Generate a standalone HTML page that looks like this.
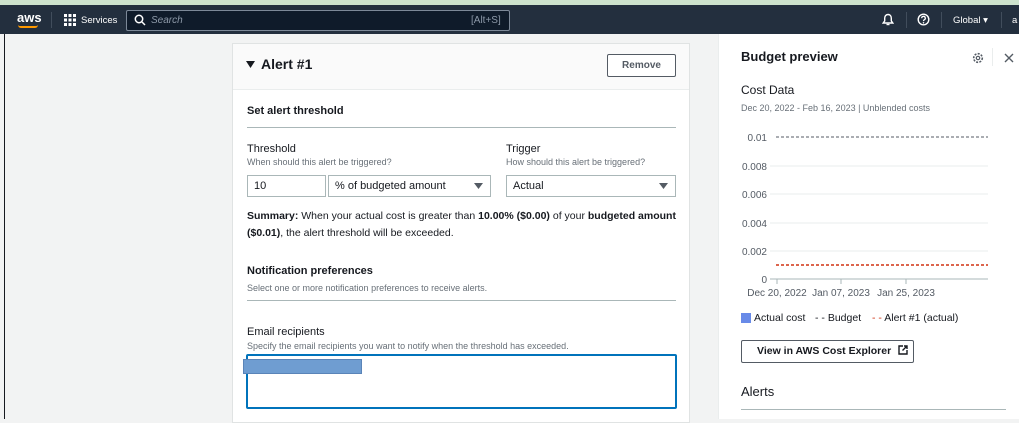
<!DOCTYPE html>
<html><head><style>
*{box-sizing:border-box;margin:0;padding:0}
body{width:1019px;height:419px;overflow:hidden;position:relative;background:#f2f3f3;font-family:"Liberation Sans",sans-serif;color:#16191f}
.a{position:absolute;white-space:nowrap}
.lbl{font-size:11px;color:#16191f}
.sub{font-size:9px;color:#687078}
.b{font-weight:bold}
</style></head><body>
<div class="a" style="left:0;top:0;width:1019px;height:5px;background:#cde3cd"></div>
<div class="a" style="left:0;top:5px;width:1019px;height:29px;background:#232f3e"></div>
<div class="a" style="left:17px;top:10px;color:#fff;font-size:13px;font-weight:bold">aws</div>
<div class="a" style="left:18px;top:25px;width:20px;height:3px;border-bottom:2px solid #ff9900;border-radius:0 0 10px 10px"></div>
<div class="a" style="left:51px;top:12px;width:1px;height:16px;background:#414d5c"></div>
<svg class="a" style="left:64px;top:14px" width="12" height="12"><g fill="#fff"><rect x="0" y="0" width="3" height="3"/><rect x="4.5" y="0" width="3" height="3"/><rect x="9" y="0" width="3" height="3"/><rect x="0" y="4.5" width="3" height="3"/><rect x="4.5" y="4.5" width="3" height="3"/><rect x="9" y="4.5" width="3" height="3"/><rect x="0" y="9" width="3" height="3"/><rect x="4.5" y="9" width="3" height="3"/><rect x="9" y="9" width="3" height="3"/></g></svg>
<div class="a" style="left:81px;top:15px;color:#fff;font-size:9.5px">Services</div>
<div class="a" style="left:126px;top:10px;width:384px;height:21px;background:#0f1b2a;border:1px solid #7d8998;border-radius:2px"></div>
<svg class="a" style="left:134px;top:14px" width="12" height="12"><circle cx="5" cy="5" r="3.7" fill="none" stroke="#fff" stroke-width="1.5"/><path d="M8 8l3 3" stroke="#fff" stroke-width="1.5"/></svg>
<div class="a" style="left:151px;top:15px;color:#8d99a8;font-size:10px;font-style:italic">Search</div>
<div class="a" style="left:471px;top:15px;color:#8d99a8;font-size:10px">[Alt+S]</div>
<svg class="a" style="left:882px;top:13px" width="12" height="13"><path d="M6 1.5c-2.3 0-3.3 1.8-3.3 3.8v2.6L1.2 10h9.6L9.3 7.9V5.3C9.3 3.3 8.3 1.5 6 1.5z" fill="none" stroke="#fff" stroke-width="1.4"/><path d="M4.5 11.5h3" stroke="#fff" stroke-width="1.4"/></svg>
<div class="a" style="left:906px;top:12px;width:1px;height:16px;background:#414d5c"></div>
<svg class="a" style="left:917px;top:13px" width="13" height="13"><circle cx="6.5" cy="6.5" r="5.3" fill="none" stroke="#fff" stroke-width="1.4"/><path d="M4.7 5.2a1.8 1.8 0 1 1 2.5 1.6c-.6.3-.7.6-.7 1.3" fill="none" stroke="#fff" stroke-width="1.3"/><circle cx="6.5" cy="9.8" r=".8" fill="#fff"/></svg>
<div class="a" style="left:941px;top:12px;width:1px;height:16px;background:#414d5c"></div>
<div class="a" style="left:953px;top:15px;color:#fff;font-size:9.5px">Global ▾</div>
<div class="a" style="left:1001px;top:12px;width:1px;height:16px;background:#414d5c"></div>
<div class="a" style="left:1012px;top:15px;color:#fff;font-size:9.5px">a</div>
<div class="a" style="left:4px;top:34px;width:1px;height:385px;background:#16191f"></div>

<div class="a" style="left:232px;top:43px;width:458px;height:380px;background:#fff;border:1px solid #e0e3e3"></div>
<div class="a" style="left:233px;top:44px;width:456px;height:46px;background:#fafafa;border-bottom:1px solid #eaeded"></div>
<svg class="a" style="left:246px;top:61px" width="9" height="7"><path d="M0 0h9L4.5 7z" fill="#16191f"/></svg>
<div class="a b" style="left:261px;top:56px;font-size:14px">Alert #1</div>
<div class="a" style="left:607px;top:54px;width:69px;height:23px;border:1px solid #545b64;border-radius:2px;background:#fff;font-size:10px;font-weight:bold;color:#545b64;text-align:center;line-height:21px">Remove</div>
<div class="a b" style="left:247px;top:105px;font-size:11px">Set alert threshold</div>
<div class="a" style="left:247px;top:127px;width:429px;height:1px;background:#aab7b8"></div>
<div class="a lbl" style="left:247px;top:143px">Threshold</div>
<div class="a sub" style="left:247px;top:157px">When should this alert be triggered?</div>
<div class="a lbl" style="left:506px;top:143px">Trigger</div>
<div class="a sub" style="left:506px;top:157px">How should this alert be triggered?</div>
<div class="a" style="left:247px;top:175px;width:79px;height:22px;border:1px solid #aab7b8;font-size:11px;padding:4px 6px">10</div>
<div class="a" style="left:328px;top:175px;width:163px;height:22px;border:1px solid #aab7b8;font-size:11px;padding:4px 6px">% of budgeted amount<svg style="position:absolute;right:7px;top:7px" width="9" height="6"><path d="M0 0h9L4.5 6z" fill="#545b64"/></svg></div>
<div class="a" style="left:506px;top:175px;width:170px;height:22px;border:1px solid #aab7b8;font-size:11px;padding:4px 6px">Actual<svg style="position:absolute;right:7px;top:7px" width="9" height="6"><path d="M0 0h9L4.5 6z" fill="#545b64"/></svg></div>
<div class="a" style="left:247px;top:208px;font-size:10.5px;line-height:17px;color:#16191f;white-space:normal;width:432px"><b>Summary:</b> When your actual cost is greater than <b>10.00% ($0.00)</b> of your <b>budgeted amount ($0.01)</b>, the alert threshold will be exceeded.</div>
<div class="a b" style="left:247px;top:265px;font-size:11px">Notification preferences</div>
<div class="a sub" style="left:247px;top:283px">Select one or more notification preferences to receive alerts.</div>
<div class="a" style="left:247px;top:300px;width:429px;height:1px;background:#aab7b8"></div>
<div class="a lbl" style="left:247px;top:326px">Email recipients</div>
<div class="a sub" style="left:247px;top:341px">Specify the email recipients you want to notify when the threshold has exceeded.</div>
<div class="a" style="left:246px;top:354px;width:431px;height:55px;border:2px solid #0073bb;border-radius:2px;background:#fff"></div>
<div class="a" style="left:243px;top:359px;width:119px;height:15px;background:#6f9dd1;border:1px solid #5a84b8"></div>

<div class="a" style="left:724px;top:230px;font-size:11px;color:#545b64">II</div>
<div class="a" style="left:718px;top:34px;width:301px;height:385px;background:#fff;border-left:1px solid #eaeded"></div>
<div class="a b" style="left:741px;top:49px;font-size:13px">Budget preview</div>
<svg class="a" style="left:972px;top:52px" width="12" height="12"><circle cx="6" cy="6" r="4.3" fill="none" stroke="#545b64" stroke-width="1.6" stroke-dasharray="2 1.3"/><circle cx="6" cy="6" r="1.7" fill="none" stroke="#545b64" stroke-width="1.2"/></svg>
<div class="a" style="left:992px;top:48px;width:1px;height:18px;background:#eaeded"></div>
<svg class="a" style="left:1004px;top:53px" width="10" height="10"><path d="M1 1l8 8M9 1L1 9" stroke="#545b64" stroke-width="1.4"/></svg>
<div class="a" style="left:741px;top:83px;font-size:12px">Cost Data</div>
<div class="a sub" style="left:741px;top:103px">Dec 20, 2022 - Feb 16, 2023 | Unblended costs</div>
<svg class="a" style="left:720px;top:125px" width="299" height="180" font-family="Liberation Sans" font-size="10" fill="#545b64">
<g stroke="#eaeded" stroke-width="1"><path d="M50 41h218M50 69h218M50 98h218M50 126h218"/></g>
<path d="M50 154h218" stroke="#aab7b8"/>
<path d="M56 12h212" stroke="#545b64" stroke-dasharray="3 2"/>
<path d="M56 140h212" stroke="#d13212" stroke-width="1.5" stroke-dasharray="3 2"/>
<path d="M57 154v5M121 154v5M186 154v5" stroke="#aab7b8"/>
<g text-anchor="end"><text x="47" y="16">0.01</text><text x="47" y="45">0.008</text><text x="47" y="73">0.006</text><text x="47" y="102">0.004</text><text x="47" y="130">0.002</text><text x="47" y="158">0</text></g>
<g text-anchor="middle"><text x="57" y="171">Dec 20, 2022</text><text x="121" y="171">Jan 07, 2023</text><text x="186" y="171">Jan 25, 2023</text></g>
</svg>
<div class="a" style="left:741px;top:313px;width:10px;height:10px;background:#688ae8"></div>
<div class="a" style="left:754px;top:312px;font-size:10.5px;color:#16191f">Actual cost</div>
<div class="a" style="left:815px;top:312px;font-size:10.5px;color:#16191f">- - Budget</div>
<div class="a" style="left:872px;top:312px;font-size:10.5px;color:#16191f"><span style="color:#d13212">- -</span> Alert #1 (actual)</div>
<div class="a" style="left:741px;top:340px;width:173px;height:23px;border:1px solid #545b64;border-radius:2px;font-size:10.5px;font-weight:bold;color:#16191f;line-height:21px;padding-left:15px">View in AWS Cost Explorer <svg style="vertical-align:-1px;margin-left:4px" width="10" height="10"><path d="M5 1H1v8h8V5M6 1h3v3M9 1L4.5 5.5" fill="none" stroke="#16191f" stroke-width="1.4"/></svg></div>
<div class="a" style="left:741px;top:384px;font-size:13px">Alerts</div>
<div class="a" style="left:741px;top:409px;width:265px;height:1px;background:#aab7b8"></div>
</body></html>
